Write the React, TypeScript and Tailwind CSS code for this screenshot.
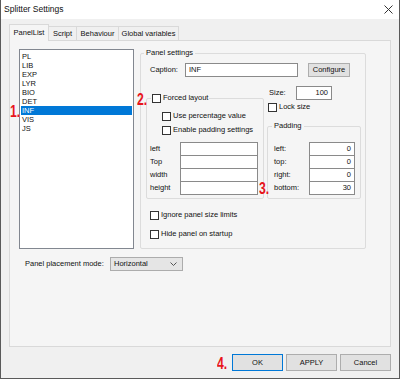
import React from 'react';

const font = { fontFamily: '"Liberation Sans", Arial, sans-serif' };

const items = ['PL', 'LIB', 'EXP', 'LYR', 'BIO', 'DET', 'INF', 'VIS', 'JS'];

const Check = ({ label }: { label: string }) => (
  <div className="flex items-center h-[10px] whitespace-nowrap">
    <span className="w-[9px] h-[9px] border border-[#333] bg-white shrink-0" />
    <span className="ml-[2px] leading-[10px]">{label}</span>
  </div>
);

const Field = ({ w, value, className = '' }: { w: string; value?: string; className?: string }) => (
  <div className={`${w} h-[14px] bg-white border border-[#8a8a8a] text-right pr-[3px] leading-[12px] ${className}`}>
    {value}
  </div>
);

const Mark = ({ n, className }: { n: string; className: string }) => (
  <span
    className={`absolute inline-block origin-left scale-x-[0.72] text-[17px] font-bold leading-none text-[#e8141b] ${className}`}
  >
    {n}
  </span>
);

export default function App() {
  return (
    <div
      className="relative w-[400px] h-[379px] bg-[#f0f0f0] border-x border-b border-[#5a5a5a] flex flex-col text-[7.5px] text-[#111] whitespace-nowrap"
      style={font}
    >
      {/* title bar */}
      <div className="h-[19px] bg-white flex items-center justify-between pl-[3px] pr-[6px]">
        <span className="text-[8.5px]">Splitter Settings</span>
        <svg width="9" height="9" viewBox="0 0 9 9" className="text-[#333]">
          <path d="M0.5 0.5 L8.5 8.5 M8.5 0.5 L0.5 8.5" stroke="currentColor" strokeWidth="1" />
        </svg>
      </div>

      <div className="flex-1 flex flex-col px-[8px] pt-[5px]">
        {/* tabs */}
        <div className="flex items-end h-[17px] -mb-px relative z-10">
          <div className="w-[40px] h-[17px] bg-[#f5f5f5] border border-b-0 border-[#d9d9d9] flex items-center justify-center">PanelList</div>
          <div className="w-[28px] h-[15px] border border-l-0 border-[#d9d9d9] bg-[#f0f0f0] flex items-center justify-center">Script</div>
          <div className="w-[42px] h-[15px] border border-l-0 border-[#d9d9d9] bg-[#f0f0f0] flex items-center justify-center">Behaviour</div>
          <div className="w-[60px] h-[15px] border border-l-0 border-[#d9d9d9] bg-[#f0f0f0] flex items-center justify-center">Global variables</div>
        </div>

        {/* tab page */}
        <div className="h-[307px] border border-[#d9d9d9] bg-[#f5f5f5] pl-[9px] pt-[8px] flex flex-col">
          <div className="flex">
            {/* list */}
            <div className="w-[115px] h-[200px] bg-white border border-[#828790] pt-[1.5px] px-px">
              {items.map((it) => (
                <div
                  key={it}
                  className={`h-[9px] leading-[9px] pl-px ${it === 'INF' ? 'bg-[#0078d7] text-white' : ''}`}
                >
                  {it}
                </div>
              ))}
            </div>

            {/* panel settings */}
            <fieldset className="ml-[6px] -mt-px w-[226px] h-[201px] border border-[#dcdcdc] rounded-[2px]">
              <legend className="ml-[3px] px-[2px] leading-[10px]">Panel settings</legend>

              <div className="flex items-center mt-[5px] ml-[9px]">
                <span className="w-[35px]">Caption:</span>
                <div className="w-[113px] h-[14px] bg-white border border-[#8a8a8a] pl-[3px] leading-[12px]">INF</div>
                <div className="ml-[10px] w-[42px] h-[14px] bg-[#e1e1e1] border border-[#adadad] flex items-center justify-center">
                  Configure
                </div>
              </div>

              <div className="flex mt-[9px]">
                {/* forced layout */}
                <fieldset className="ml-[5px] mt-[7px] w-[118px] h-[106px] border border-[#dcdcdc] rounded-[2px]">
                  <legend className="ml-[4px] px-px">
                    <Check label="Forced layout" />
                  </legend>
                  <div className="ml-[15px] mt-[8px]">
                    <Check label="Use percentage value" />
                    <div className="mt-[4px]">
                      <Check label="Enable padding settings" />
                    </div>
                  </div>
                  <div className="mt-[7px] ml-[3px]">
                    {['left', 'Top', 'width', 'height'].map((l, i) => (
                      <div key={l} className={`flex items-center ${i ? '-mt-px' : ''}`}>
                        <span className="w-[30px]">{l}</span>
                        <Field w="w-[78px]" />
                      </div>
                    ))}
                  </div>
                </fieldset>

                {/* size + padding */}
                <div className="ml-[3px] flex flex-col">
                  <div className="flex items-center ml-[2px]">
                    <span className="w-[27px]">Size:</span>
                    <Field w="w-[36px]" value="100" />
                  </div>
                  <div className="mt-[2px] ml-px">
                    <Check label="Lock size" />
                  </div>
                  <fieldset className="mt-[9px] w-[94px] h-[78px] border border-[#dcdcdc] rounded-[2px]">
                    <legend className="ml-[4px] px-[2px] leading-[10px]">Padding</legend>
                    <div className="mt-[11px] ml-[6px]">
                      {[
                        ['left:', '0'],
                        ['top:', '0'],
                        ['right:', '0'],
                        ['bottom:', '30'],
                      ].map(([l, v], i) => (
                        <div key={l} className={`flex items-center ${i ? '-mt-px' : ''}`}>
                          <span className="w-[35px]">{l}</span>
                          <Field w="w-[46px]" value={v} />
                        </div>
                      ))}
                    </div>
                  </fieldset>
                </div>
              </div>

              <div className="ml-[9px] mt-[11px]">
                <Check label="Ignore panel size limits" />
                <div className="mt-[9px]">
                  <Check label="Hide panel on startup" />
                </div>
              </div>
            </fieldset>
          </div>

          {/* placement mode */}
          <div className="flex items-center mt-[8px] ml-[6px]">
            <span className="w-[85px]">Panel placement mode:</span>
            <div className="w-[73px] h-[14px] bg-[#e5e5e5] border border-[#acacac] flex items-center justify-between pl-[3px] pr-[5px]">
              <span>Horizontal</span>
              <svg width="7" height="4" viewBox="0 0 7 4">
                <path d="M0.5 0.5 L3.5 3.5 L6.5 0.5" fill="none" stroke="#555" strokeWidth="1" />
              </svg>
            </div>
          </div>
        </div>

        {/* buttons */}
        <div className="flex justify-end gap-[3px] mt-[7px]">
          <div className="w-[51px] h-[17px] bg-[#e1e1e1] border border-[#0078d7] flex items-center justify-center">OK</div>
          <div className="w-[51px] h-[17px] bg-[#e1e1e1] border border-[#adadad] flex items-center justify-center">APPLY</div>
          <div className="w-[51px] h-[17px] bg-[#e1e1e1] border border-[#adadad] flex items-center justify-center">Cancel</div>
        </div>
      </div>

      <Mark n="1." className="left-[9px] top-[103px]" />
      <Mark n="2." className="left-[136px] top-[91px]" />
      <Mark n="3." className="left-[258px] top-[180px]" />
      <Mark n="4." className="left-[216px] top-[355px]" />
    </div>
  );
}
